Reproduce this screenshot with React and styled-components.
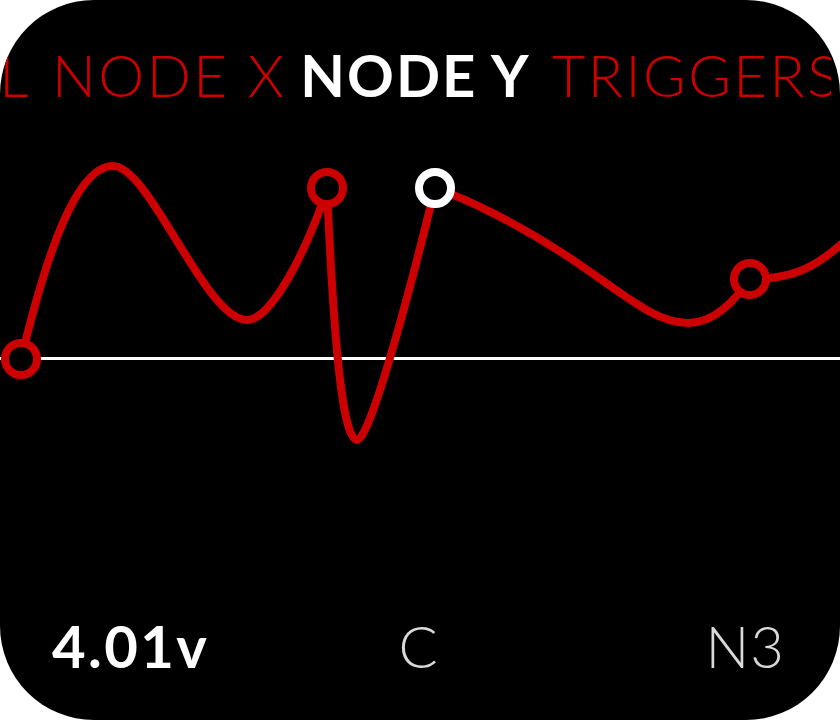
import React from 'react';
import styled, { createGlobalStyle } from 'styled-components';

const RED = '#cc0000';

const GlobalStyle = createGlobalStyle`
  html, body {
    margin: 0;
    padding: 0;
    background: #fff;
  }
  body {
    font-family: 'Lato', 'Noto Sans', sans-serif;
  }
`;

const Screen = styled.div`
  width: 840px;
  height: 720px;
  background: #000;
  border-radius: 94px;
  overflow: hidden;
  display: flex;
  flex-direction: column;
`;

const TabStrip = styled.div`
  display: grid;
  grid-template-columns: 1fr auto 1fr;
  padding: 46px 9px 0 0;
  height: 58px;
`;

// tabs either side of the active one, clipped by the screen edge
const TabGroup = styled.div`
  display: flex;
  gap: 21px;
  overflow: hidden;
  justify-content: ${p => (p.side === 'left' ? 'flex-end' : 'flex-start')};
  padding: ${p => (p.side === 'left' ? '0 14px 0 0' : '0 0 0 21px')};
`;

const Tab = styled.span`
  flex-shrink: 0;
  font-size: 58px;
  line-height: 58px;
  white-space: nowrap;
  letter-spacing: ${p => (p.active ? '2px' : '2.5px')};
  font-weight: ${p => (p.active ? 700 : 300)};
  color: ${p => (p.active ? '#fff' : RED)};
`;

const Graph = styled.svg`
  display: block;
  width: 840px;
  height: 480px;
`;

const Footer = styled.div`
  display: grid;
  grid-template-columns: 1fr auto 1fr;
  padding: 33px 55px 0 52px;
  font-size: 58px;
  line-height: 58px;
`;

const Readout = styled.span`
  justify-self: ${p => p.align || 'start'};
  color: ${p => (p.strong ? '#fff' : '#d9d9d9')};
  font-weight: ${p => (p.strong ? 700 : 300)};
  letter-spacing: ${p => (p.strong ? '2.4px' : '1px')};
`;

const before = ['GLOBAL', 'NODE X'];
const after = ['TRIGGERS', 'OUTPUT'];

const nodes = [
  { x: 21, y: 359 },
  { x: 327, y: 188 },
  { x: 435, y: 188, selected: true },
  { x: 750, y: 279 },
];

const curve = [
  'M21,359',
  'C38,290 70,166 113,166',
  'C150,166 205,320 247,320',
  'C275,320 315,230 327,188',
  'C332,300 340,440 357,440',
  'C372,440 420,250 435,188',
  'C470,200 520,225 570,258',
  'C625,295 655,323 688,323',
  'C715,323 735,300 750,279',
  'C790,279 815,270 850,236',
].join(' ');

const App = () => (
  <>
    <GlobalStyle />
    <Screen>
      <TabStrip>
        <TabGroup side="left">
          {before.map(t => <Tab key={t}>{t}</Tab>)}
        </TabGroup>
        <Tab active>NODE Y</Tab>
        <TabGroup side="right">
          {after.map(t => <Tab key={t}>{t}</Tab>)}
        </TabGroup>
      </TabStrip>

      <Graph viewBox="0 104 840 480">
        <line x1="0" y1="358.5" x2="840" y2="358.5" stroke="#fff" strokeWidth="3" />
        <path d={curve} fill="none" stroke={RED} strokeWidth="8" strokeLinecap="round" />
        {nodes.map(n => (
          <circle
            key={n.x}
            cx={n.x}
            cy={n.y}
            r="16"
            fill="#000"
            stroke={n.selected ? '#fff' : RED}
            strokeWidth="8"
          />
        ))}
      </Graph>

      <Footer>
        <Readout strong>4.01v</Readout>
        <Readout align="center">C</Readout>
        <Readout align="end">N3</Readout>
      </Footer>
    </Screen>
  </>
);

export default App;
